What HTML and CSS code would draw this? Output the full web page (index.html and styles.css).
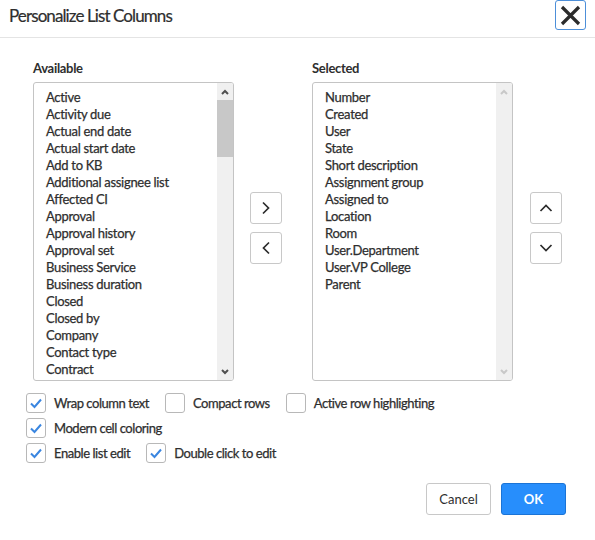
FILE: index.html
```html
<!DOCTYPE html>
<html lang="en">
<head>
    <meta charset="UTF-8">
    <title>Personalize List Columns</title>
    <link rel="stylesheet" href="styles.css">
</head>
<body>

<div class="dialog">
    <div class="dialog-header">
        <h1 class="dialog-title">Personalize List Columns</h1>
        <button class="close-btn" aria-label="Close">
            <svg width="21" height="21" viewBox="0 0 21 21"><path d="M2 2 L19 19 M19 2 L2 19" stroke="#2b2b2b" stroke-width="3.2" fill="none"/></svg>
        </button>
    </div>

    <div class="dialog-body">
        <div class="columns">
            <div class="col">
                <div class="col-label">Available</div>
                <div class="listbox">
                    <div class="list-items">
                        <div>Active</div>
                        <div>Activity due</div>
                        <div>Actual end date</div>
                        <div>Actual start date</div>
                        <div>Add to KB</div>
                        <div>Additional assignee list</div>
                        <div>Affected CI</div>
                        <div>Approval</div>
                        <div>Approval history</div>
                        <div>Approval set</div>
                        <div>Business Service</div>
                        <div>Business duration</div>
                        <div>Closed</div>
                        <div>Closed by</div>
                        <div>Company</div>
                        <div>Contact type</div>
                        <div>Contract</div>
                    </div>
                    <div class="scrollbar">
                        <span class="sb-arrow"><svg width="8" height="6" viewBox="0 0 8 6"><path d="M1 5 L4 2 L7 5" stroke="currentColor" stroke-width="2" fill="none"/></svg></span>
                        <div class="sb-track"><div class="sb-thumb"></div></div>
                        <span class="sb-arrow"><svg width="8" height="6" viewBox="0 0 8 6"><path d="M1 1 L4 4 L7 1" stroke="currentColor" stroke-width="2" fill="none"/></svg></span>
                    </div>
                </div>
            </div>

            <div class="move-btns">
                <button class="icon-btn"><svg width="12" height="14" viewBox="0 0 12 14"><path d="M3 1.5 L8.5 7 L3 12.5" stroke="#2b2b2b" stroke-width="1.7" fill="none"/></svg></button>
                <button class="icon-btn"><svg width="12" height="14" viewBox="0 0 12 14"><path d="M9 1.5 L3.5 7 L9 12.5" stroke="#2b2b2b" stroke-width="1.7" fill="none"/></svg></button>
            </div>

            <div class="col">
                <div class="col-label">Selected</div>
                <div class="listbox">
                    <div class="list-items">
                        <div>Number</div>
                        <div>Created</div>
                        <div>User</div>
                        <div>State</div>
                        <div>Short description</div>
                        <div>Assignment group</div>
                        <div>Assigned to</div>
                        <div>Location</div>
                        <div>Room</div>
                        <div>User.Department</div>
                        <div>User.VP College</div>
                        <div>Parent</div>
                    </div>
                    <div class="scrollbar disabled">
                        <span class="sb-arrow"><svg width="8" height="6" viewBox="0 0 8 6"><path d="M1 5 L4 2 L7 5" stroke="currentColor" stroke-width="2" fill="none"/></svg></span>
                        <div class="sb-track"></div>
                        <span class="sb-arrow"><svg width="8" height="6" viewBox="0 0 8 6"><path d="M1 1 L4 4 L7 1" stroke="currentColor" stroke-width="2" fill="none"/></svg></span>
                    </div>
                </div>
            </div>

            <div class="move-btns order-btns">
                <button class="icon-btn"><svg width="14" height="12" viewBox="0 0 14 12"><path d="M1.5 9 L7 3.5 L12.5 9" stroke="#2b2b2b" stroke-width="1.7" fill="none"/></svg></button>
                <button class="icon-btn"><svg width="14" height="12" viewBox="0 0 14 12"><path d="M1.5 3 L7 8.5 L12.5 3" stroke="#2b2b2b" stroke-width="1.7" fill="none"/></svg></button>
            </div>
        </div>

        <div class="options">
            <div class="option-row">
                <label class="check"><span class="box on"></span>Wrap column text</label>
                <label class="check"><span class="box"></span>Compact rows</label>
                <label class="check"><span class="box"></span>Active row highlighting</label>
            </div>
            <div class="option-row">
                <label class="check"><span class="box on"></span>Modern cell coloring</label>
            </div>
            <div class="option-row">
                <label class="check"><span class="box on"></span>Enable list edit</label>
                <label class="check"><span class="box on"></span>Double click to edit</label>
            </div>
        </div>
    </div>

    <div class="dialog-footer">
        <button class="btn">Cancel</button>
        <button class="btn btn-primary">OK</button>
    </div>
</div>

</body>
</html>
```

FILE: styles.css
```css
body {
    margin: 0;
    font-family: Lato, 'Liberation Sans', sans-serif;
    color: #2e2e2e;
    background: #fff;
}

.dialog {
    width: 595px;
    height: 540px;
}

.dialog-header {
    display: flex;
    justify-content: space-between;
    align-items: flex-start;
    height: 37px;
    border-bottom: 1px solid #e4e4e4;
    padding-left: 9px;
    padding-right: 9px;
}

.dialog-title {
    margin: 5px 0 0;
    font-size: 17px;
    letter-spacing: -0.9px;
    font-weight: normal;
    color: #2e2e2e;
    -webkit-text-stroke: 0.2px #2e2e2e;
}

.close-btn {
    width: 31px;
    height: 30px;
    padding: 0;
    border: 1px solid #4d8fd9;
    border-radius: 3px;
    background: #fff;
    display: flex;
    align-items: center;
    justify-content: center;
}

.dialog-body {
    padding: 22px 0 0 26px;
}

.columns {
    display: flex;
    align-items: flex-start;
    padding-left: 7px;
}

.col-label {
    font-size: 13px;
    font-weight: bold;
    letter-spacing: -0.3px;
    line-height: 16px;
    margin-bottom: 6px;
}

.listbox {
    display: flex;
    width: 199px;
    height: 297px;
    border: 1px solid #c4c4c4;
    border-radius: 3px;
    overflow: hidden;
}

.list-items {
    flex: 1;
    overflow: hidden;
    padding: 6px 0 0 12px;
    font-size: 13px;
    line-height: 17px;
    letter-spacing: -0.3px;
    -webkit-text-stroke: 0.25px #2e2e2e;
}

.scrollbar {
    width: 16px;
    display: flex;
    flex-direction: column;
    background: #f0f0f0;
}

.sb-arrow {
    height: 17px;
    display: flex;
    align-items: center;
    justify-content: center;
    color: #505050;
}

.scrollbar.disabled .sb-arrow {
    color: #c8c8c8;
}

.sb-track {
    flex: 1;
}

.sb-thumb {
    height: 57px;
    background: #c8c8c8;
}

.move-btns {
    display: flex;
    flex-direction: column;
    gap: 8px;
    margin-top: 132px;
    margin-left: 16px;
    margin-right: 30px;
}

.order-btns {
    margin-left: 17px;
    margin-right: 0;
}

.icon-btn {
    width: 32px;
    height: 32px;
    padding: 0;
    border: 1px solid #c8c8c8;
    border-radius: 3px;
    background: #fff;
    display: flex;
    align-items: center;
    justify-content: center;
}

.options {
    margin-top: 12px;
    display: flex;
    flex-direction: column;
    gap: 5px;
}

.option-row {
    display: flex;
    gap: 16px;
}

.check {
    display: flex;
    align-items: center;
    gap: 8px;
    font-size: 13px;
    letter-spacing: -0.45px;
    -webkit-text-stroke: 0.25px #2e2e2e;
    height: 20px;
}

.box {
    width: 18px;
    height: 18px;
    border: 1px solid #b8b8b8;
    border-radius: 3px;
    background: #fff;
}

.box.on {
    background: #fff url("data:image/svg+xml,%3Csvg xmlns='http://www.w3.org/2000/svg' width='18' height='18'%3E%3Cpath d='M4 9.5 L7.5 13 L14 5.5' stroke='%233a86e0' stroke-width='2' fill='none'/%3E%3C/svg%3E") no-repeat center;
}

.dialog-footer {
    display: flex;
    justify-content: flex-end;
    gap: 10px;
    padding: 20px 29px 0 0;
}

.btn {
    width: 65px;
    height: 32px;
    font-family: inherit;
    font-size: 13px;
    color: #2e2e2e;
    border: 1px solid #c8c8c8;
    border-radius: 3px;
    background: #fff;
}

.btn-primary {
    background: #278efc;
    border-color: #1b74d6;
    color: #fff;
    font-weight: bold;
}
```
